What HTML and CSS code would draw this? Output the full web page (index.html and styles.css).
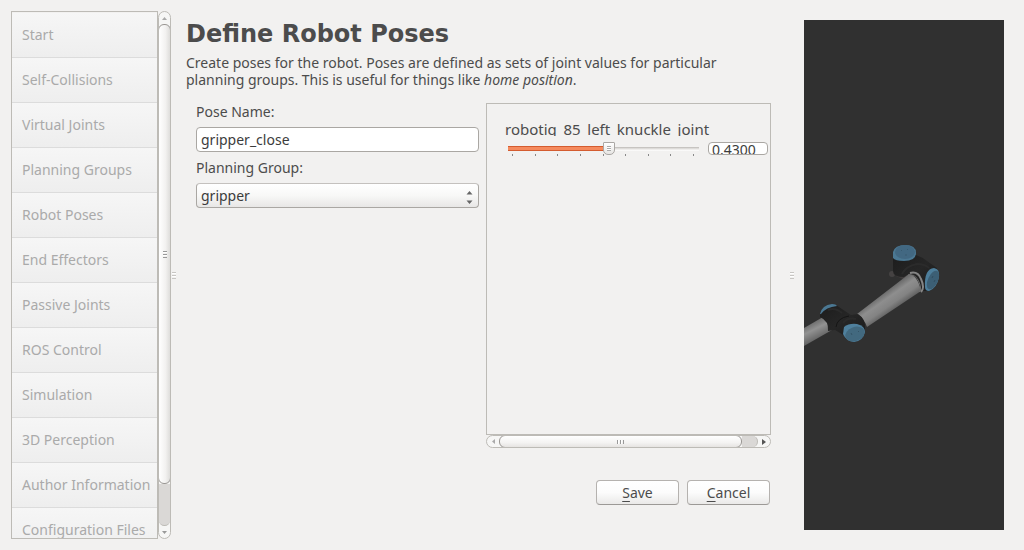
FILE: index.html
```html
<!DOCTYPE html>
<html lang="en">
<head>
<meta charset="utf-8">
<meta name="viewport" content="width=device-width, initial-scale=1">
<title>Define Robot Poses</title>
<link rel="stylesheet" href="styles.css">
</head>
<body>
<div class="app">
  <aside class="sidebar">
    <nav class="steps">
      <button class="step" disabled>Start</button>
      <button class="step" disabled>Self-Collisions</button>
      <button class="step" disabled>Virtual Joints</button>
      <button class="step" disabled>Planning Groups</button>
      <button class="step" disabled>Robot Poses</button>
      <button class="step" disabled>End Effectors</button>
      <button class="step" disabled>Passive Joints</button>
      <button class="step" disabled>ROS Control</button>
      <button class="step" disabled>Simulation</button>
      <button class="step" disabled>3D Perception</button>
      <button class="step" disabled>Author Information</button>
      <button class="step" disabled>Configuration Files</button>
    </nav>
    <div class="scrollbar scrollbar-v" aria-hidden="true">
      <span class="arrow"><svg width="5" height="3" viewBox="0 0 5 3"><path d="M0 3L2.500 0L5 3z" fill="#aaa"/></svg></span>
      <span class="thumb thumb-v"><span class="grip"></span></span>
      <span class="trough"></span>
      <span class="arrow"><svg width="5" height="3" viewBox="0 0 5 3"><path d="M0 0L2.500 3L5 0z" fill="#999"/></svg></span>
    </div>
  </aside>
  <div class="splitter" aria-hidden="true"><span class="grip grip-light"></span></div>
  <main class="main">
    <h1 class="title">Define Robot Poses</h1>
    <p class="intro">Create poses for the robot. Poses are defined as sets of joint values for particular planning groups. This is useful for things like <em>home position</em>.</p>
    <div class="columns">
      <form class="form">
        <label class="label" for="pose">Pose Name:</label>
        <input class="field" id="pose" type="text" value="gripper_close">
        <label class="label" for="group">Planning Group:</label>
        <div class="select-wrap">
          <select class="field select" id="group"><option>gripper</option></select>
          <svg class="select-arrows" width="7" height="13" viewBox="0 0 7 13"><path d="M0.500 3.500L3.500 0L6.500 3.500zM0.500 9.500L3.500 13L6.500 9.500z" fill="#666"/></svg>
        </div>
      </form>
      <section class="joints">
        <div class="joint-area">
          <label class="joint-label" for="joint">robotiq_85_left_knuckle_joint</label>
          <div class="joint-row">
            <div class="slider">
              <input class="range" id="joint" type="range" min="0" max="100" value="53">
              <div class="ticks"><i></i><i></i><i></i><i></i><i></i><i></i><i></i><i></i><i></i></div>
            </div>
            <input class="joint-value" type="text" value="0.4300" aria-label="Joint value">
          </div>
        </div>
        <div class="scrollbar scrollbar-h" aria-hidden="true">
          <span class="arrow"><svg width="3" height="5" viewBox="0 0 3 5"><path d="M3 0L0 2.500L3 5z" fill="#aaa"/></svg></span>
          <span class="thumb thumb-h"><span class="grip grip-h"></span></span>
          <span class="trough trough-h"></span>
          <span class="arrow"><svg width="4" height="6" viewBox="0 0 4 6"><path d="M0 0L4 3L0 6z" fill="#555"/></svg></span>
        </div>
      </section>
    </div>
    <div class="actions">
      <button class="button"><span class="key">S</span>ave</button>
      <button class="button"><span class="key">C</span>ancel</button>
    </div>
  </main>
  <div class="splitter splitter-right" aria-hidden="true"><span class="grip grip-light"></span></div>
  <section class="viewer" aria-label="Robot view">
    <svg class="robot" viewBox="0 0 200 510" preserveAspectRatio="xMinYMid slice">
      <defs>
        <linearGradient id="tube" gradientUnits="userSpaceOnUse" x1="78" y1="273" x2="90" y2="290">
          <stop offset="0" stop-color="#666"/><stop offset=".35" stop-color="#8e8e8e"/><stop offset=".7" stop-color="#838383"/><stop offset="1" stop-color="#606060"/>
        </linearGradient>
        <linearGradient id="tube2" gradientUnits="userSpaceOnUse" x1="7" y1="302" x2="15" y2="318">
          <stop offset="0" stop-color="#686868"/><stop offset=".45" stop-color="#929292"/><stop offset="1" stop-color="#666"/>
        </linearGradient>
        <linearGradient id="shell" x1="0" y1="0" x2="1" y2="1">
          <stop offset="0" stop-color="#1c1c1c"/><stop offset=".5" stop-color="#262626"/><stop offset="1" stop-color="#1a1a1a"/>
        </linearGradient>
      </defs>
      <ellipse cx="88" cy="254" rx="3" ry="3" fill="#454242"/>
      <path d="M92 256L101 260L108 253L95 250z" fill="#3f3b3b"/>
      <path d="M89 234L112 235Q118 237 123 241L133 248L125 271H118L108 252L100 257Q89 257 89 251z" fill="url(#shell)"/>
      <path d="M98 254Q102 246 113 244Q121 244 125 248" stroke="#2b2b2b" fill="none" stroke-width="2"/>
      <path d="M53 294L105 254Q114 256 117 271L63 307Q60 298 53 294z" fill="url(#tube)"/>
      <path d="M106 253Q114 251 117 259Q121 268 117 272" fill="none" stroke="#858585" stroke-width="2"/>
      <path d="M104 255Q112 254 115 262Q118 269 115 272" fill="none" stroke="#707070"/>
      <path d="M89 232Q91 225 101 225Q112 225 112 233Q112 241 100 241Q91 241 89 238z" fill="#4b7893"/>
      <ellipse cx="101" cy="232" rx="10" ry="7" fill="#426882"/>
      <path d="M97 230L98 231M103 229L104 230M101 235H103" stroke="#385a70"/>
      <path d="M121 267Q120 249 130 248Q136 249 135 257Q133 268 125 271Q121 271 121 267z" fill="#4d7e9b"/>
      <ellipse cx="129" cy="260" rx="5" ry="10" transform="rotate(25 129 260)" fill="#3c5f75"/>
      <path d="M129 256L128 258M131 260L130 262" stroke="#304d60"/>
      <path d="M0 308L19 297Q27 301 28 310L0 326z" fill="url(#tube2)"/>
      <path d="M16 295Q20 286 32 285L47 295L54 294Q62 299 61 309L54 316Q44 319 36 313L31 310L24 311Q25 301 16 297z" fill="url(#shell)"/>
      <path d="M32 307Q33 298 45 296" fill="none" stroke="#151515"/>
      <path d="M24 290Q31 287 38 293M39 303Q44 297 52 299" fill="none" stroke="#2a2a2a" stroke-width="2"/>
      <path d="M16 294Q18 285 28 284Q32 284 33 286Q22 287 17 294z" fill="#4b7893"/>
      <path d="M40 307Q45 303 53 304Q61 306 61 312Q59 321 50 322Q42 321 39 314z" fill="#4f809d"/>
      <ellipse cx="51" cy="314" rx="10" ry="7" transform="rotate(-20 51 314)" fill="#42697f"/>
      <path d="M47 313L48 315M54 311L55 312" stroke="#345467"/>
    </svg>
  </section>
</div>
</body>
</html>
```
FILE: styles.css
```css
* {
  box-sizing: border-box;
}

body {
  margin: 0;
  background: #f2f1f0;
  color: #4c4c4c;
  font: 14px/17px "Noto Sans", sans-serif;
}

button,
input,
select {
  margin: 0;
  font: inherit;
  color: inherit;
}

.app {
  display: flex;
  height: 100vh;
}

.sidebar {
  display: flex;
  flex: 0 0 160px;
  min-width: 0;
  margin: 11px 0 11px 11px;
}

.steps {
  flex: 1;
  min-width: 0;
  padding-top: 1px;
  overflow: hidden;
  border: 1px solid #bdbbb6;
}

.step {
  display: block;
  width: 100%;
  height: 45px;
  padding: 0 0 2px 10px;
  border: 0;
  border-bottom: 1px solid #dcdcdc;
  background: linear-gradient(#f6f6f6, #eeeeee);
  color: #aaa;
  text-align: left;
  white-space: nowrap;
}

.scrollbar {
  display: flex;
  overflow: hidden;
  border: 1px solid #bdbbb6;
  border-radius: 7px;
  background: #f6f6f5;
}

.scrollbar-v {
  flex: 0 0 13px;
  flex-direction: column;
}

.arrow {
  display: flex;
  flex: 0 0 12px;
  align-items: center;
  justify-content: center;
}

.trough {
  flex: 1;
  border-bottom: 1px solid #bdbbb6;
  border-radius: 0 0 6px 6px;
  background: #dad8d6;
}

.trough-h {
  border-right: 1px solid #bdbbb6;
  border-bottom: 0;
  border-radius: 0 6px 6px 0;
}

.thumb {
  display: flex;
  align-items: center;
  justify-content: center;
  border: 1px solid #999693;
  border-radius: 6px;
}

.thumb-v {
  flex: 0 0 460px;
  background: linear-gradient(90deg, #fff, #f2f1f0 60%, #dedddb);
  margin: 0 -1px;
}

.thumb-h {
  flex: 0 0 86%;
  margin: -1px 0;
  background: linear-gradient(#fff, #f4f3f2 60%, #e6e4e2);
}

.scrollbar-h {
  height: 13px;
}

.grip {
  width: 4px;
  height: 7px;
  background: repeating-linear-gradient(#999 0 1px, #fff 1px 2px, transparent 2px 3px);
}

.grip-h {
  width: 7px;
  height: 4px;
  background: repeating-linear-gradient(90deg, #999 0 1px, #fff 1px 2px, transparent 2px 3px);
}

.grip-light {
  background: repeating-linear-gradient(#c8c6c3 0 1px, #fff 1px 2px, transparent 2px 3px);
}

.splitter {
  display: flex;
  flex: 0 0 15px;
  align-items: center;
  padding-left: 1px;
}

.splitter-right {
  flex-basis: 33px;
  padding-left: 19px;
}

.main {
  display: flex;
  flex: 1;
  flex-direction: column;
  min-width: 0;
  padding: 19px 0 45px;
}

.title {
  margin: 0 0 5px;
  font: bold 24px/30px "DejaVu Sans", sans-serif;
}

.intro {
  max-width: 580px;
  margin: 0 0 15px;
}

.columns {
  display: grid;
  flex: 1;
  grid-template-columns: minmax(0, 283fr) minmax(0, 285fr);
  gap: 7px;
  padding-left: 10px;
}

.form {
  display: flex;
  flex-direction: column;
}

.label {
  margin-bottom: 7px;
}

.field {
  display: block;
  width: 100%;
  height: 25px;
  margin-bottom: 7px;
  padding: 0 4px;
  border: 1px solid #aaa7a3;
  border-radius: 4px;
  background: #fff;
  color: #3c3c3c;
  line-height: 23px;
}

.select-wrap {
  position: relative;
}

.select {
  appearance: none;
  border-top-color: #c4c1be;
  background: linear-gradient(#fff, #f8f8f7 50%, #e8e7e6);
}

.select-arrows {
  position: absolute;
  top: 8px;
  right: 6px;
  pointer-events: none;
}

.joints {
  display: flex;
  flex-direction: column;
}

.joint-area {
  flex: 1;
  padding: 17px 2px 0 18px;
  border: 1px solid #bdbbb6;
}

.joint-label {
  display: block;
  height: 15px;
  margin-bottom: 6px;
  overflow: hidden;
  font-size: 15px;
}

.joint-row {
  display: flex;
  align-items: flex-start;
  gap: 6px;
}

.slider {
  flex: 1;
  min-width: 0;
  padding: 0 3px;
}

.range {
  display: block;
  width: 100%;
  height: 13px;
  appearance: none;
  background: linear-gradient(#bbb8b5, #e9e7e5 50%, #fff) center / 100% 4px no-repeat;
}

.range::-webkit-slider-runnable-track {
  height: 13px;
  border-radius: 3px;
  background: linear-gradient(#d45c30 0 1px, #f58a5e 1px 4px, #d45c30 4px 5px) 0 center / 52% 5px no-repeat;
}

.range::-webkit-slider-thumb {
  width: 12px;
  height: 13px;
  appearance: none;
  border: 1px solid #aaa7a4;
  border-radius: 1px 1px 5px 5px;
  background: repeating-linear-gradient(#aaa 0 1px, #fff 1px 2px) center / 4px 5px no-repeat, linear-gradient(#fff, #e6e5e3);
}

.ticks {
  display: flex;
  justify-content: space-between;
  height: 2px;
  margin-top: -1px;
  padding: 0 5px 0 4px;
}

.ticks i {
  width: 1px;
  background: #888;
}

.joint-value {
  flex: 0 0 60px;
  width: 60px;
  height: 13px;
  padding: 2px 3px 0;
  border: 1px solid #aaa7a3;
  border-radius: 4px;
  background: #fff;
  color: #3c3c3c;
}

.actions {
  display: flex;
  justify-content: flex-end;
  gap: 8px;
  padding: 32px 1px 0 0;
}

.button {
  width: 83px;
  height: 25px;
  padding: 0;
  border: 1px solid #b5b2af;
  border-bottom-color: #9c9996;
  border-radius: 4px;
  background: linear-gradient(#fff, #fcfcfc 50%, #eae9e8);
}

.key {
  text-decoration: underline;
  text-underline-offset: 3px;
}

.viewer {
  flex: 0 0 200px;
  margin: 20px 20px 20px 0;
  background: #303030;
}

.robot {
  display: block;
  width: 100%;
  height: 100%;
}
```
